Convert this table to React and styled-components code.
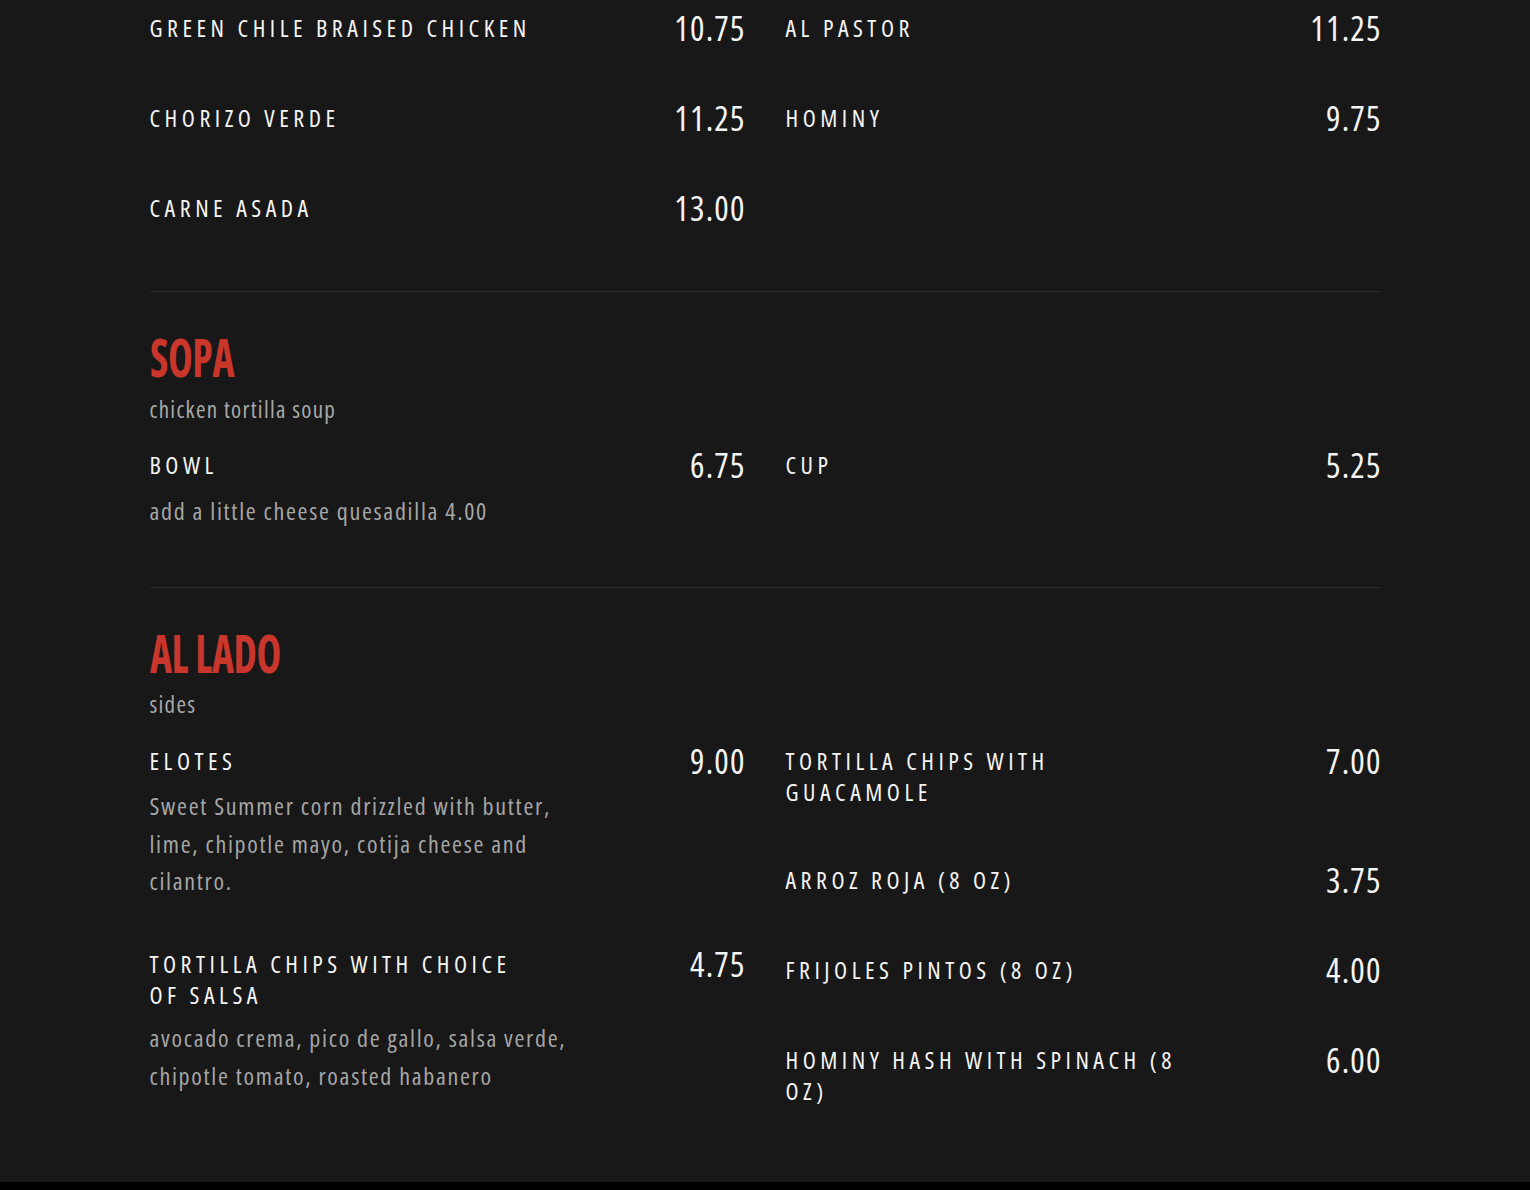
import React from "react";
import styled, { createGlobalStyle } from "styled-components";

const GlobalStyle = createGlobalStyle`
  html, body {
    margin: 0;
    padding: 0;
    background: #181818;
  }
  body {
    font-family: "Open Sans", "Roboto", "Liberation Sans", sans-serif;
    font-stretch: 75%;
    color: #f2f2f2;
  }
`;

const Page = styled.main`
  background: #181818;
`;

const Menu = styled.div`
  max-width: 1231px;
  margin: 0 auto;
  padding-bottom: 10px;
`;

const Section = styled.section`
  padding: ${(p) => (p.$first ? "11.5px" : "39px")} 0 9.5px;
  border-bottom: ${(p) => (p.$last ? "none" : "1px solid #2a2a2a")};
`;

const TitleRow = styled.div`
  line-height: 0;
`;

const SectionTitle = styled.h2`
  display: inline-block;
  margin: 0;
  font-family: "Open Sans", "Roboto", sans-serif;
  font-stretch: 75%;
  font-weight: 700;
  font-size: 53px;
  line-height: 52px;
  letter-spacing: -0.5px;
  color: #c9362c;
  text-transform: uppercase;
  transform: scaleX(0.79);
  transform-origin: left center;
`;

const SectionSub = styled.p`
  margin: 10.5px 0 25.5px;
  font-size: 23px;
  line-height: 30px;
  letter-spacing: 1.3px;
  color: #a9a9a9;
`;

const Columns = styled.div`
  display: grid;
  grid-template-columns: 1fr 1fr;
  column-gap: 41px;
  align-items: start;
`;

const Column = styled.div`
  display: flex;
  flex-direction: column;
`;

const Item = styled.article`
  padding-bottom: 57px;
`;

const ItemHead = styled.div`
  display: flex;
  justify-content: space-between;
  align-items: flex-start;
`;

const ItemName = styled.h3`
  margin: 0;
  max-width: 395px;
  font-size: 24px;
  line-height: 31px;
  font-weight: 500;
  letter-spacing: 4.5px;
  text-transform: uppercase;
  color: #f4f4f4;
`;

const Price = styled.span`
  margin-right: -1.2px;
  font-size: 34px;
  line-height: 33px;
  letter-spacing: 1.2px;
  color: #f4f4f4;
`;

const ItemDesc = styled.p`
  margin: 9.75px 0 -9.25px;
  max-width: 435px;
  font-size: 24px;
  line-height: 37.5px;
  letter-spacing: 1.7px;
  color: #a6a6a6;
`;

const Footer = styled.footer`
  height: 40px;
  background: #000;
`;

const sections = [
  {
    first: true,
    left: [
      { name: "Green Chile Braised Chicken", price: "10.75" },
      { name: "Chorizo Verde", price: "11.25" },
      { name: "Carne Asada", price: "13.00" },
    ],
    right: [
      { name: "Al Pastor", price: "11.25" },
      { name: "Hominy", price: "9.75" },
    ],
  },
  {
    title: "Sopa",
    sub: "chicken tortilla soup",
    left: [
      { name: "Bowl", price: "6.75", desc: "add a little cheese quesadilla 4.00" },
    ],
    right: [{ name: "Cup", price: "5.25" }],
  },
  {
    title: "Al Lado",
    sub: "sides",
    last: true,
    left: [
      {
        name: "Elotes",
        price: "9.00",
        desc: "Sweet Summer corn drizzled with butter, lime, chipotle mayo, cotija cheese and cilantro.",
      },
      {
        name: "Tortilla Chips with Choice of Salsa",
        price: "4.75",
        desc: "avocado crema, pico de gallo, salsa verde, chipotle tomato, roasted habanero",
      },
    ],
    right: [
      { name: "Tortilla Chips with Guacamole", price: "7.00" },
      { name: "Arroz Roja (8 oz)", price: "3.75" },
      { name: "Frijoles Pintos (8 oz)", price: "4.00" },
      { name: "Hominy Hash with Spinach (8 oz)", price: "6.00" },
    ],
  },
];

function MenuItem({ item }) {
  return (
    <Item>
      <ItemHead>
        <ItemName>{item.name}</ItemName>
        <Price>{item.price}</Price>
      </ItemHead>
      {item.desc && <ItemDesc>{item.desc}</ItemDesc>}
    </Item>
  );
}

export default function App() {
  return (
    <>
      <GlobalStyle />
      <Page>
        <Menu>
          {sections.map((s, i) => (
            <Section key={i} $first={s.first} $last={s.last}>
              {s.title && (
                <TitleRow>
                  <SectionTitle>{s.title}</SectionTitle>
                </TitleRow>
              )}
              {s.sub && <SectionSub>{s.sub}</SectionSub>}
              <Columns>
                <Column>
                  {s.left.map((it, j) => (
                    <MenuItem key={j} item={it} />
                  ))}
                </Column>
                <Column>
                  {s.right.map((it, j) => (
                    <MenuItem key={j} item={it} />
                  ))}
                </Column>
              </Columns>
            </Section>
          ))}
        </Menu>
        <Footer />
      </Page>
    </>
  );
}
